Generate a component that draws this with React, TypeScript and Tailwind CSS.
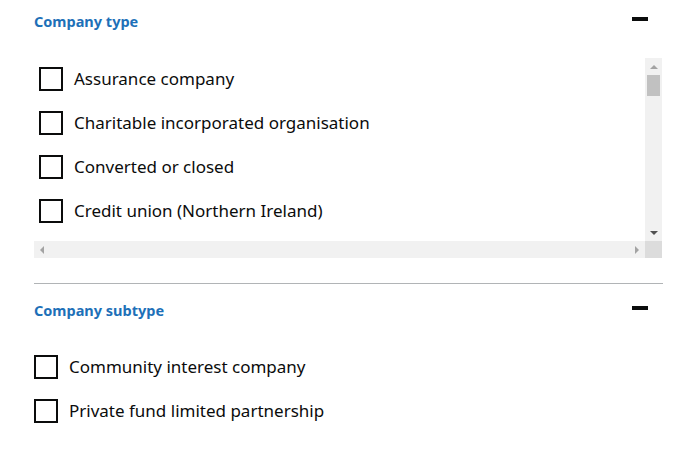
const companyTypes = [
  'Assurance company',
  'Charitable incorporated organisation',
  'Converted or closed',
  'Credit union (Northern Ireland)',
  'European public limited liability company (SE)',
  'Further education or sixth form college corporation',
  'Industrial and provident society',
  'Investment company with variable capital',
  'Limited liability partnership',
  'Limited partnership',
]

const companySubtypes = ['Community interest company', 'Private fund limited partnership']

const font = { fontFamily: '"Noto Sans", "Liberation Sans", sans-serif' }

function Minus() {
  return <span className="mt-[6px] block h-[4px] w-[16px] self-start bg-[#0b0c0c]" />
}

function Checkbox({ label }: { label: string }) {
  return (
    <label className="flex h-[44px] items-start gap-[11px] whitespace-nowrap pt-[9px]">
      <span className="box-border h-[24px] w-[24px] shrink-0 border-2 border-[#0b0c0c] bg-white" />
      <span className="text-[17px] leading-[24px] text-[#0b0c0c]">{label}</span>
    </label>
  )
}

function SectionHeader({ title }: { title: string }) {
  return (
    <div className="flex h-[20px] items-center justify-between pr-[14px]">
      <h2 className="text-[14.5px] font-bold leading-[20px] text-[#1d70b8]">{title}</h2>
      <Minus />
    </div>
  )
}

function Arrow({ dir, color }: { dir: 'up' | 'down' | 'left' | 'right'; color: string }) {
  const points = {
    up: '0,4 8,4 4,0',
    down: '0,0 8,0 4,4',
    left: '4,0 4,8 0,4',
    right: '0,0 0,8 4,4',
  }[dir]
  const vertical = dir === 'up' || dir === 'down'
  return (
    <svg width={vertical ? 8 : 4} height={vertical ? 4 : 8} viewBox={vertical ? '0 0 8 4' : '0 0 4 8'}>
      <polygon points={points} fill={color} />
    </svg>
  )
}

// drawn scrollbars: the headless browser hides native ones
function ScrollBox({ children }: { children: React.ReactNode }) {
  return (
    <div className="grid h-[200px] grid-cols-[1fr_17px] grid-rows-[1fr_17px]">
      <div className="overflow-hidden">{children}</div>
      <div className="flex flex-col bg-[#f1f1f1]">
        <div className="flex h-[17px] items-center justify-center">
          <Arrow dir="up" color="#a3a3a3" />
        </div>
        <div className="flex-1 px-[2px]">
          <div className="h-[21px] bg-[#c1c1c1]" />
        </div>
        <div className="flex h-[17px] items-center justify-center">
          <Arrow dir="down" color="#505050" />
        </div>
      </div>
      <div className="flex items-center justify-between bg-[#f1f1f1] px-[6px]">
        <Arrow dir="left" color="#a3a3a3" />
        <Arrow dir="right" color="#a3a3a3" />
      </div>
      <div className="bg-[#dcdcdc]" />
    </div>
  )
}

export default function App() {
  return (
    <div className="min-h-screen bg-white px-[34px] pt-[11px]" style={font}>
      <section className="w-[628px]">
        <SectionHeader title="Company type" />
        <div className="mt-[27px]">
          <ScrollBox>
            <div className="px-[5px]">
              {companyTypes.map((t) => (
                <Checkbox key={t} label={t} />
              ))}
            </div>
          </ScrollBox>
        </div>
      </section>
      <hr className="mt-[25px] w-[629px] border-t border-[#b1b4b6]" />
      <section className="mt-[16px] w-[628px]">
        <SectionHeader title="Company subtype" />
        <div className="mt-[26px]">
          {companySubtypes.map((t) => (
            <Checkbox key={t} label={t} />
          ))}
        </div>
      </section>
    </div>
  )
}
